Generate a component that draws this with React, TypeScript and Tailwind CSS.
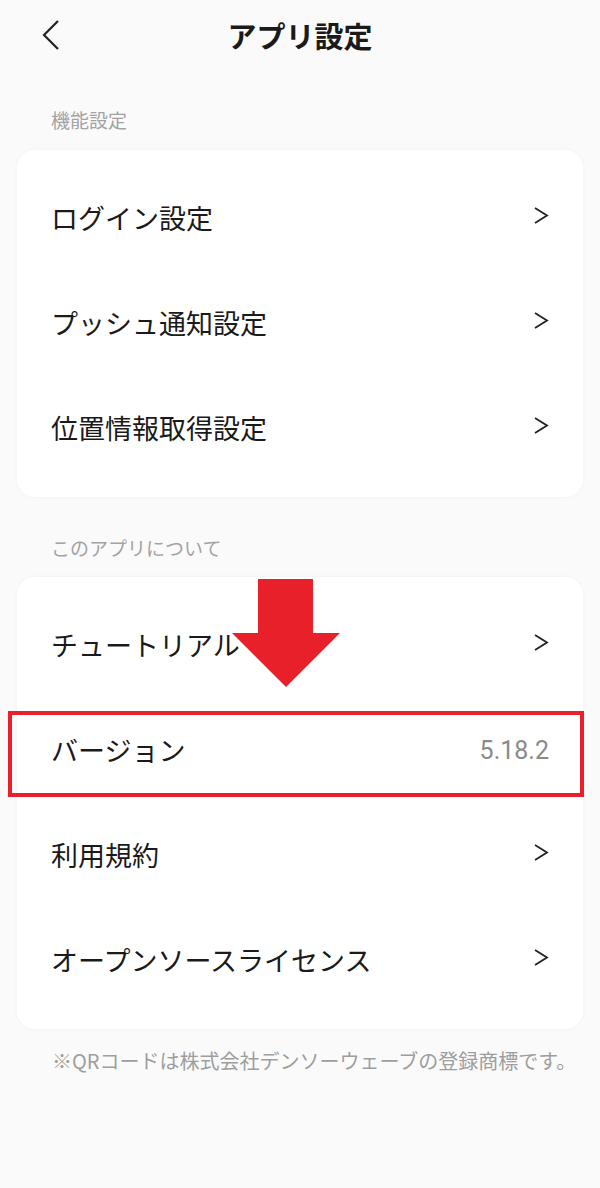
import React from 'react';

type Row = { label: string; value?: string };

const featureRows: Row[] = [
  { label: 'ログイン設定' },
  { label: 'プッシュ通知設定' },
  { label: '位置情報取得設定' },
];

const aboutRows: Row[] = [
  { label: 'チュートリアル' },
  { label: 'バージョン', value: '5.18.2' },
  { label: '利用規約' },
  { label: 'オープンソースライセンス' },
];

const font = { fontFamily: '"Noto Sans CJK JP", "Noto Sans", sans-serif' };

function Chevron() {
  return (
    <svg width="16" height="20" viewBox="0 0 16 20" className="mb-[6px]">
      <polyline points="2,2 14,9.5 2,17" fill="none" stroke="#222" strokeWidth="1.8" />
    </svg>
  );
}

function SettingRow({ row }: { row: Row }) {
  return (
    <div className="flex h-[105px] items-center justify-between pl-[34px] pr-[34px]">
      <span className="text-[27px] text-[#1a1a1a]">{row.label}</span>
      {row.value ? (
        <span className="text-[25px] text-[#8a8a8a]" style={{ fontFamily: 'Roboto, sans-serif' }}>
          {row.value}
        </span>
      ) : (
        <Chevron />
      )}
    </div>
  );
}

function SectionLabel({ children }: { children: React.ReactNode }) {
  return <div className="px-[51px] text-[19px] leading-none text-[#a3a3a3]">{children}</div>;
}

export default function App() {
  return (
    <div className="min-h-[1188px] w-[600px] bg-[#fafafa]" style={font}>
      <header className="relative flex h-[72px] items-center justify-center">
        <svg className="absolute left-[40px] top-[19px]" width="22" height="32" viewBox="0 0 22 32">
          <polyline points="18,2 4,16 18,30" fill="none" stroke="#222" strokeWidth="2.2" />
        </svg>
        <h1 className="text-[29px] font-bold text-[#1a1a1a]">アプリ設定</h1>
      </header>

      <div className="pt-[38px]">
        <SectionLabel>機能設定</SectionLabel>
      </div>
      <div className="mx-[17px] mt-[21px] rounded-[18px] bg-white py-[16px] shadow-[0_0_4px_rgba(0,0,0,0.04)]">
        {featureRows.map((r) => (
          <SettingRow key={r.label} row={r} />
        ))}
      </div>

      <div className="pt-[41px]">
        <SectionLabel>このアプリについて</SectionLabel>
      </div>
      <div className="relative mx-[17px] mt-[20px] rounded-[18px] bg-white py-[16px] shadow-[0_0_4px_rgba(0,0,0,0.04)]">
        {aboutRows.map((r) => (
          <SettingRow key={r.label} row={r} />
        ))}
        {/* highlight box */}
        <div className="pointer-events-none absolute left-[-9px] right-[-1px] top-[134px] h-[86px] border-[4px] border-[#e8202a]" />
        {/* arrow */}
        <svg className="absolute left-[213px] top-[2px]" width="112" height="110" viewBox="0 0 112 110">
          <polygon points="28,0 83,0 83,54 110,54 56,108 2,54 28,54" fill="#e8202a" />
        </svg>
      </div>

      <p className="mt-[17px] pl-[52px] text-[20px] text-[#9e9e9e]">
        ※QRコードは株式会社デンソーウェーブの登録商標です。
      </p>
    </div>
  );
}
